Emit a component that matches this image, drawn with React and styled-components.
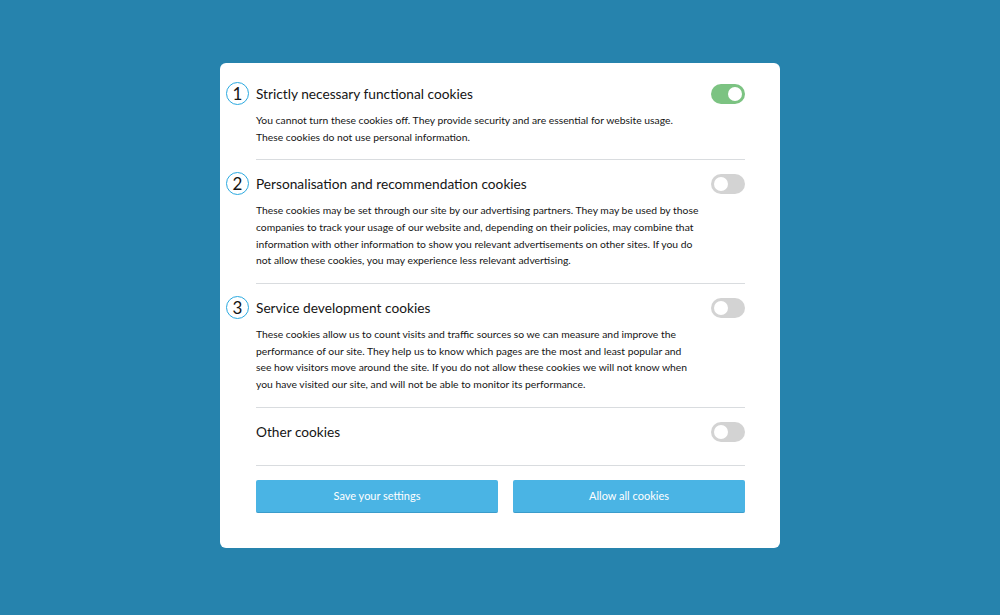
import styled, { createGlobalStyle } from "styled-components"

const GlobalStyle = createGlobalStyle`
    html, body {
        margin: 0;
        padding: 0;
        background: #2683ad;
        font-family: "Lato", "Noto Sans", sans-serif;
    }
`

const sections = [
    {
        num: 1,
        title: "Strictly necessary functional cookies",
        on: true,
        lines: [
            "You cannot turn these cookies off. They provide security and are essential for website usage.",
            "These cookies do not use personal information.",
        ],
    },
    {
        num: 2,
        title: "Personalisation and recommendation cookies",
        on: false,
        lines: [
            "These cookies may be set through our site by our advertising partners. They may be used by those",
            "companies to track your usage of our website and, depending on their policies, may combine that",
            "information with other information to show you relevant advertisements on other sites. If you do",
            "not allow these cookies, you may experience less relevant advertising.",
        ],
    },
    {
        num: 3,
        title: "Service development cookies",
        on: false,
        lines: [
            "These cookies allow us to count visits and traffic sources so we can measure and improve the",
            "performance of our site. They help us to know which pages are the most and least popular and",
            "see how visitors move around the site. If you do not allow these cookies we will not know when",
            "you have visited our site, and will not be able to monitor its performance.",
        ],
    },
    {
        title: "Other cookies",
        on: false,
        lines: [],
    },
]

export default function App() {
    return (
        <>
            <GlobalStyle />
            <Page>
                <Panel>
                    {sections.map((s, i) => (
                        <Section key={i} last={s.lines.length === 0}>
                            <TitleRow>
                                {s.num && <Number>{s.num}</Number>}
                                <Title>{s.title}</Title>
                                <Toggle on={s.on}><Knob on={s.on} /></Toggle>
                            </TitleRow>
                            {s.lines.length > 0 && (
                                <Description>
                                    {s.lines.map((l, j) => <Line key={j}>{l}</Line>)}
                                </Description>
                            )}
                        </Section>
                    ))}
                    <Buttons>
                        <Button>Save your settings</Button>
                        <Button>Allow all cookies</Button>
                    </Buttons>
                </Panel>
            </Page>
        </>
    )
}

const Page = styled.div`
    width: 1000px;
    height: 615px;
    display: flex;
    align-items: flex-start;
    justify-content: center;
    padding-top: 63px;
    box-sizing: border-box;
`
const Panel = styled.div`
    width: 560px;
    box-sizing: border-box;
    background: #ffffff;
    border-radius: 6px;
    padding: 7px 35px 35px 36px;
`
const Section = styled.div`
    padding: 14px 0 ${props => (props.last ? "23px" : "14px")};
    border-bottom: 1px solid #d9dcdf;
`
const TitleRow = styled.div`
    position: relative;
    display: flex;
    align-items: center;
    height: 20px;
`
const Number = styled.div`
    position: absolute;
    left: -30px;
    top: -2px;
    width: 21px;
    height: 21px;
    border: 1.5px solid #2aa9e0;
    border-radius: 50%;
    display: flex;
    align-items: center;
    justify-content: center;
    font-size: 17px;
    font-weight: 400;
    color: #151515;
    line-height: 1;
`
const Title = styled.div`
    flex: 1;
    font-size: 13.7px;
    color: #151515;
    line-height: 20px;
`
const Toggle = styled.div`
    width: 34px;
    height: 20px;
    border-radius: 10px;
    background: ${props => (props.on ? "#7cc382" : "#d3d3d3")};
    position: relative;
    flex-shrink: 0;
`
const Knob = styled.div`
    position: absolute;
    top: 3px;
    left: ${props => (props.on ? "17px" : "3px")};
    width: 14px;
    height: 14px;
    border-radius: 50%;
    background: #ffffff;
`
const Description = styled.div`
    margin-top: 8px;
    font-size: 10.35px;
    line-height: 16.67px;
    color: #151515;
`
const Line = styled.div`
    white-space: nowrap;
`
const Buttons = styled.div`
    display: flex;
    gap: 15px;
    margin-top: 14px;
`
const Button = styled.div`
    flex: 1;
    height: 33px;
    display: flex;
    align-items: center;
    justify-content: center;
    background: #4ab4e4;
    border-bottom: 1px solid #3b9ccb;
    border-radius: 2px;
    color: #ffffff;
    font-size: 11px;
    box-sizing: border-box;
    &:first-child {
        flex: 0 0 242px;
    }
`
